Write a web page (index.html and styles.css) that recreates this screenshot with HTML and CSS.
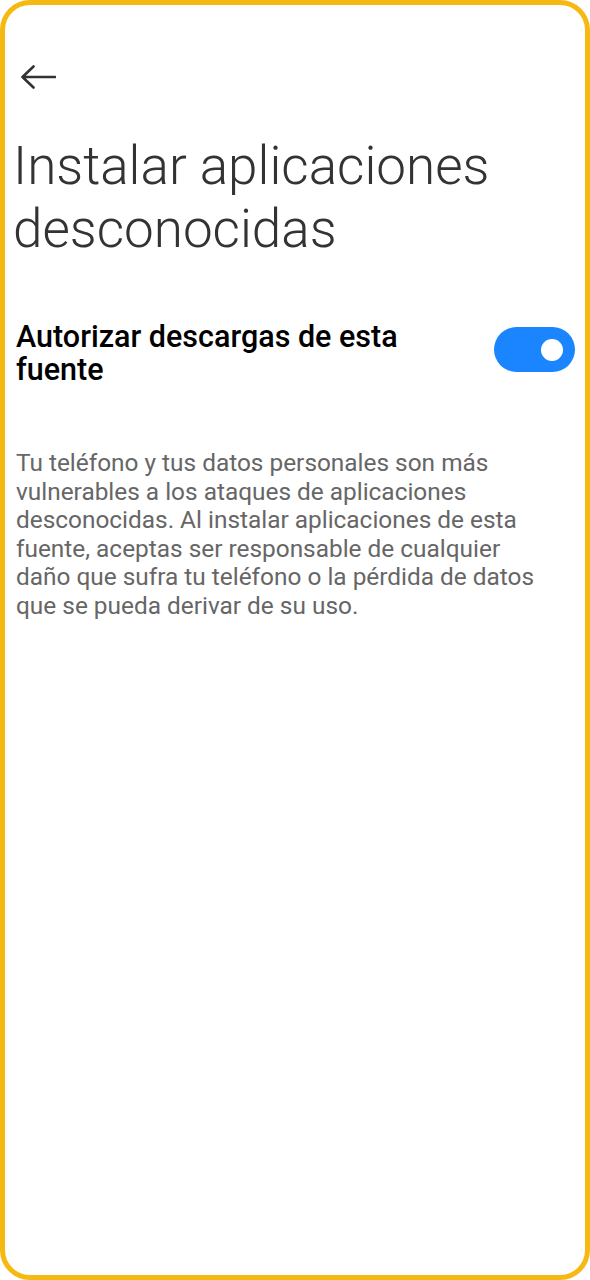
FILE: index.html
```html
<!DOCTYPE html>
<html lang="es">
<head>
<meta charset="utf-8">
<title>Instalar aplicaciones desconocidas</title>
<link rel="stylesheet" href="styles.css">
</head>
<body>
<div class="frame">
  <div class="topbar">
    <svg class="back" width="36" height="24" viewBox="0 0 36 24" aria-label="Atrás">
      <path d="M2.5 12 H35 M13.5 1.5 L2.5 12 L13.5 22.5" fill="none" stroke="#333" stroke-width="2.6" stroke-linecap="round" stroke-linejoin="round"/>
    </svg>
  </div>
  <h1 class="title">Instalar aplicaciones desconocidas</h1>
  <div class="setting">
    <div class="setting-label">Autorizar descargas de esta fuente</div>
    <div class="toggle"><span class="knob"></span></div>
  </div>
  <p class="desc">Tu teléfono y tus datos personales son más vulnerables a los ataques de aplicaciones desconocidas. Al instalar aplicaciones de esta fuente, aceptas ser responsable de cualquier daño que sufra tu teléfono o la pérdida de datos que se pueda derivar de su uso.</p>
</div>
</body>
</html>
```

FILE: styles.css
```css
html, body {
  margin: 0;
  padding: 0;
  background: #ffffff;
}
body {
  font-family: Roboto, "Liberation Sans", sans-serif;
}
.frame {
  box-sizing: border-box;
  width: 590px;
  height: 1280px;
  border: 5px solid #F5B912;
  border-radius: 30px;
  background: #ffffff;
  padding: 0 10px 0 11px;
}
.topbar {
  height: 60px;
  padding-top: 60px;
  box-sizing: border-box;
  padding-left: 4px;
}
.back {
  display: block;
}
.title {
  margin: 70px 0 0 -3px;
  font-weight: 300;
  font-size: 53px;
  line-height: 63px;
  color: #333333;
  width: 520px;
}
.setting {
  display: flex;
  justify-content: space-between;
  align-items: flex-start;
  margin-top: 59px;
}
.setting-label {
  font-weight: 500;
  font-size: 30.5px;
  line-height: 33px;
  color: #000000;
  width: 420px;
}
.toggle {
  width: 81px;
  height: 45px;
  border-radius: 23px;
  background: #1A85FE;
  margin-top: 7px;
  display: flex;
  align-items: center;
  justify-content: flex-end;
  padding-right: 12px;
  box-sizing: border-box;
  flex-shrink: 0;
}
.knob {
  width: 22px;
  height: 22px;
  border-radius: 50%;
  background: #ffffff;
}
.desc {
  margin: 63px 0 0 0;
  font-size: 24.4px;
  line-height: 28.6px;
  color: #666666;
  width: 530px;
}
```
